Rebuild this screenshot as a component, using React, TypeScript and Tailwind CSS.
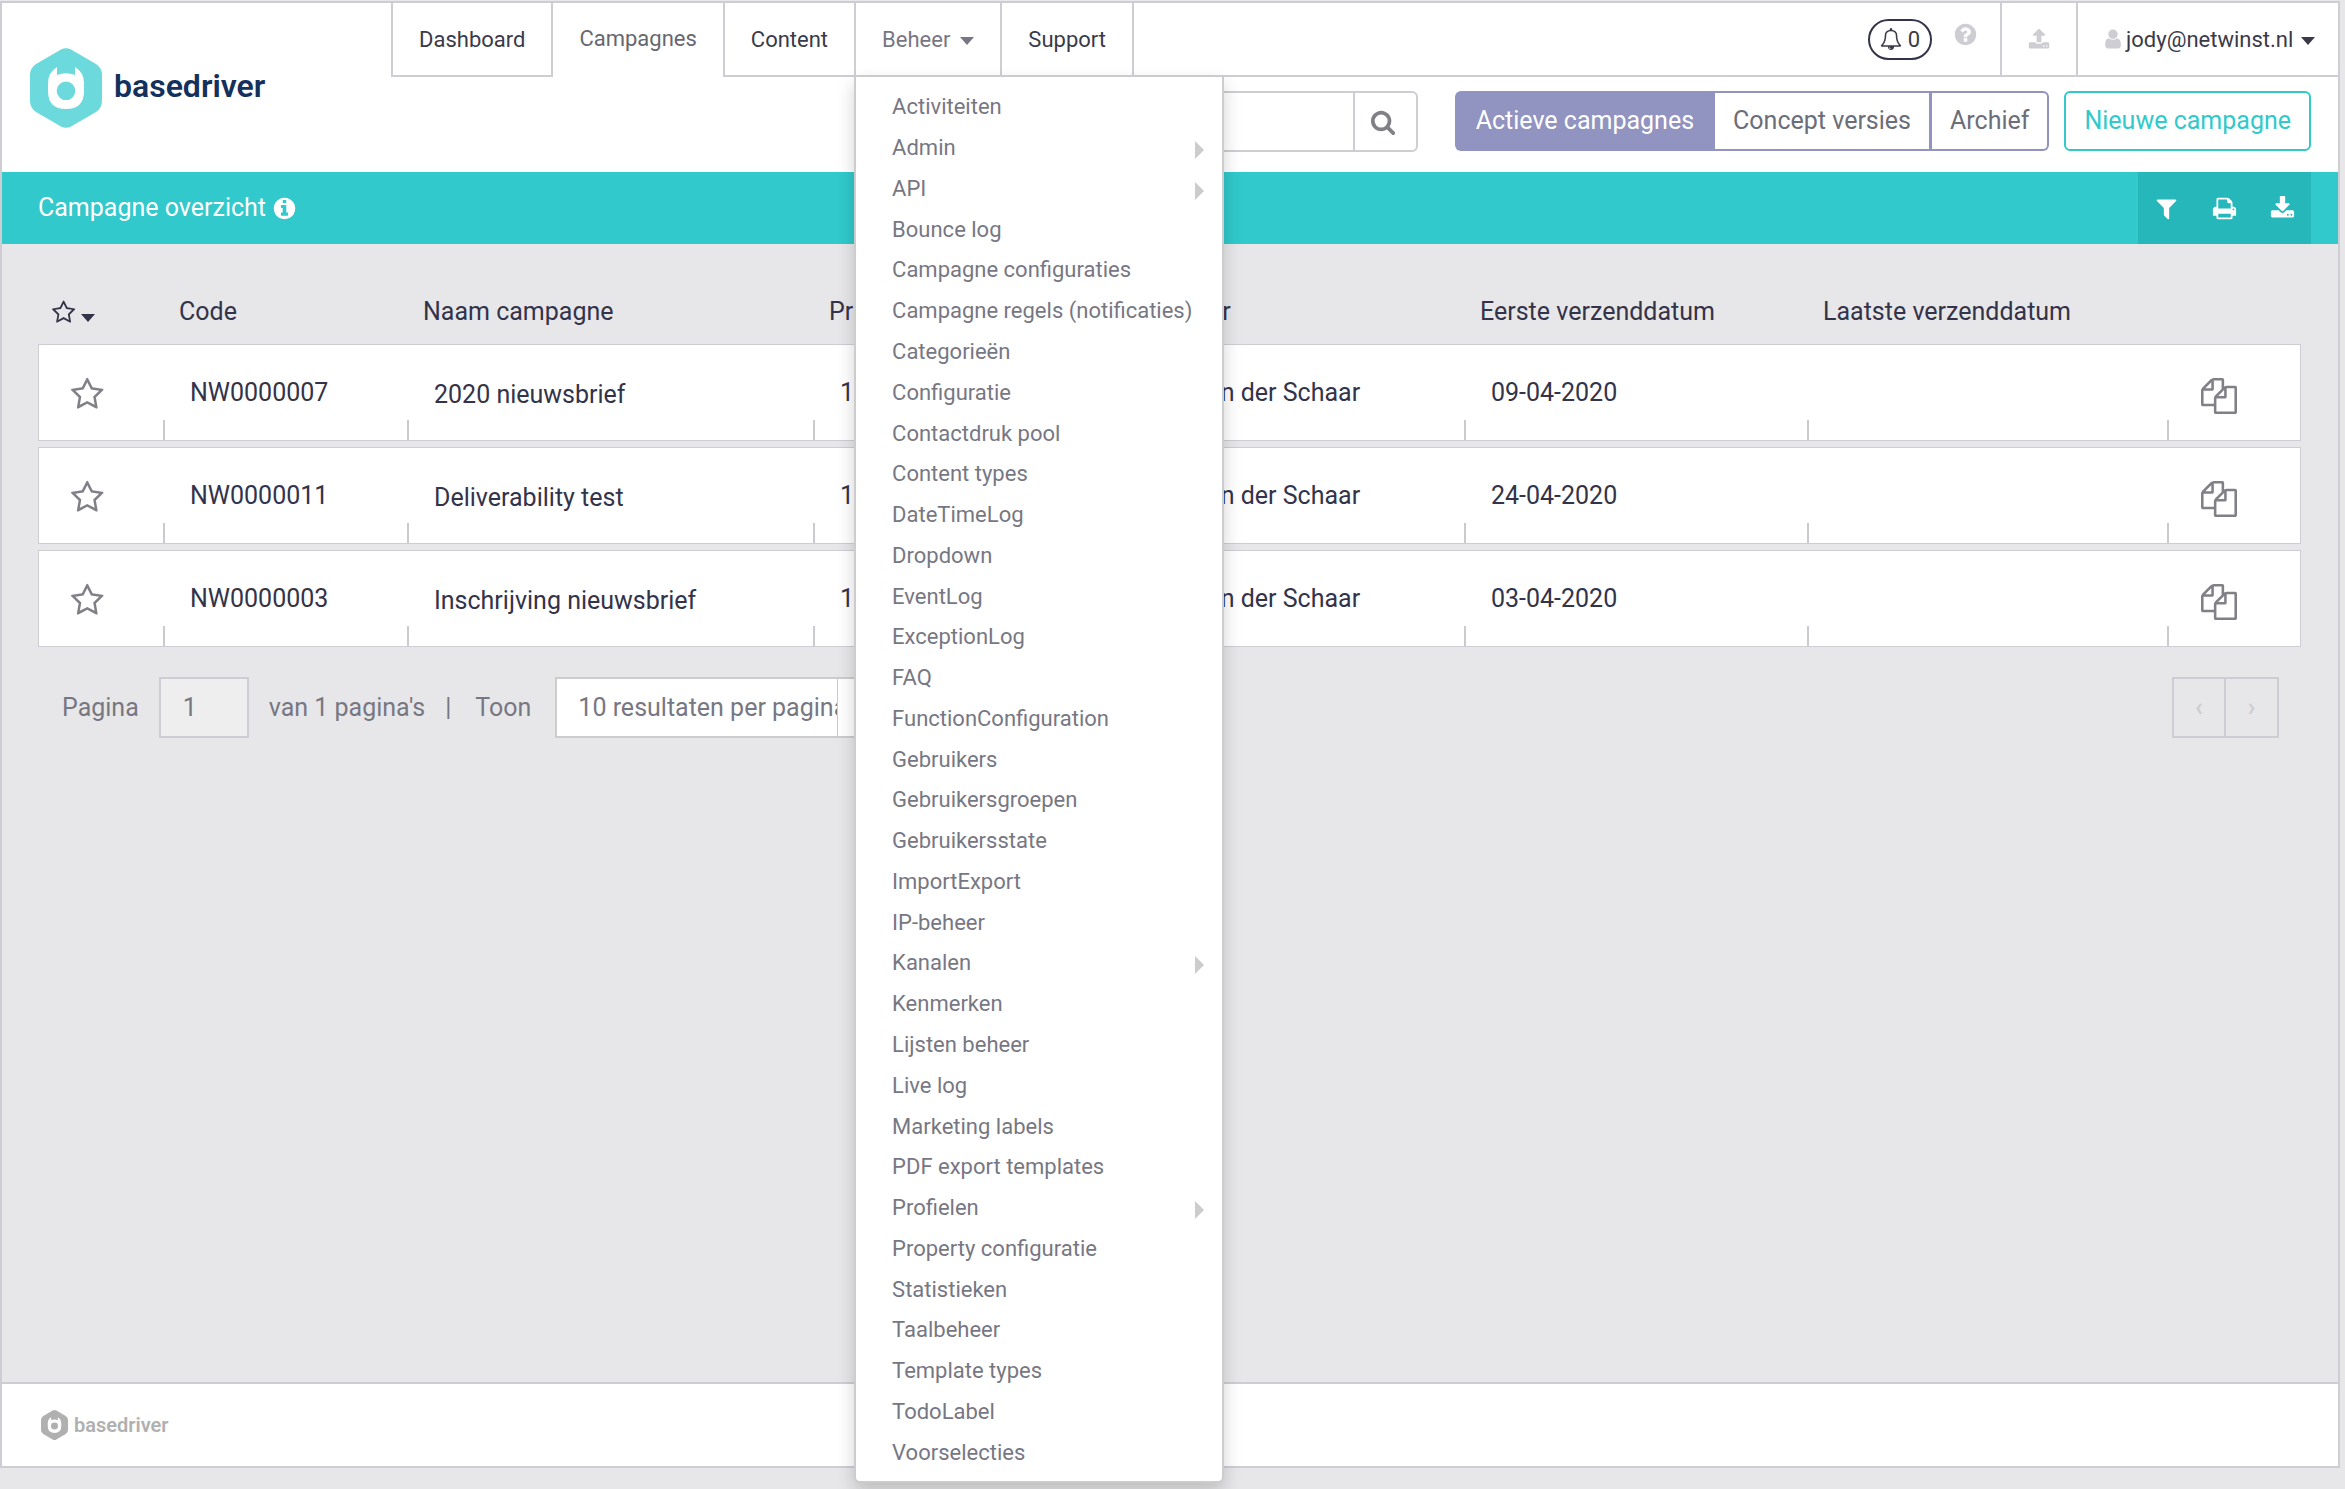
import type { ReactNode } from 'react';
import clsx from 'clsx';

const iconPaths = {
  star: 'M1137 1004l306-297-422-62-189-382-189 382-422 62 306 297-73 421 378-199 377 199zm527-357q0 22-26 48l-363 354 86 500q1 7 1 20 0 50-41 50-19 0-40-12l-449-236-449 236q-22 12-40 12-21 0-31.5-14.5t-10.5-35.5q0-6 2-20l86-500-364-354q-25-27-25-48 0-37 56-46l502-73 225-455q19-41 49-41t49 41l225 455 502 73q56 9 56 46z',
  bell: 'M912 1696q0-16-16-16-59 0-101.5-42.5t-42.5-101.5q0-16-16-16t-16 16q0 73 51.5 124.5t124.5 51.5q16 0 16-16zm-666-288h1300q-266-300-266-832 0-51-24-105t-69-103-121.5-80.5-169.5-31.5-169.5 31.5-121.5 80.5-69 103-24 105q0 532-266 832zm1482 0q0 52-38 90t-90 38h-448q0 106-75 181t-181 75-181-75-75-181h-448q-52 0-90-38t-38-90q50-42 91-88t85-119.5 74.5-158.5 50-206 19.5-260q0-152 117-282.5t307-158.5q-8-19-8-39 0-40 28-68t68-28 68 28 28 68q0 20-8 39 190 28 307 158.5t117 282.5q0 139 19.5 260t50 206 74.5 158.5 85 119.5 91 88z',
  copy: 'M1696 384q40 0 68 28t28 68v1216q0 40-28 68t-68 28h-960q-40 0-68-28t-28-68v-288h-544q-40 0-68-28t-28-68v-672q0-40 20-88t48-76l408-408q28-28 76-48t88-20h416q40 0 68 28t28 68v328q68-40 128-40h416zm-544 213l-299 299h299v-299zm-640-384l-299 299h299v-299zm196 647l316-316v-416h-384v416q0 40-28 68t-68 28h-416v640h512v-256q0-40 20-88t48-76zm956 804v-1152h-384v416q0 40-28 68t-68 28h-416v640h896z',
  upload: 'M1344 1472q0-26-19-45t-45-19-45 19-19 45 19 45 45 19 45-19 19-45zm256 0q0-26-19-45t-45-19-45 19-19 45 19 45 45 19 45-19 19-45zm128-224v320q0 40-28 68t-68 28h-1472q-40 0-68-28t-28-68v-320q0-40 28-68t68-28h427q21 56 70.5 92t110.5 36h256q61 0 110.5-36t70.5-92h427q40 0 68 28t28 68zm-325-648q-17 40-59 40h-256v448q0 26-19 45t-45 19h-256q-26 0-45-19t-19-45v-448h-256q-42 0-59-40-17-39 14-69l448-448q18-19 45-19t45 19l448 448q31 30 14 69z',
  download: 'M1344 1344q0-26-19-45t-45-19-45 19-19 45 19 45 45 19 45-19 19-45zm256 0q0-26-19-45t-45-19-45 19-19 45 19 45 45 19 45-19 19-45zm128-224v320q0 40-28 68t-68 28h-1472q-40 0-68-28t-28-68v-320q0-40 28-68t68-28h465l135 136q58 56 136 56t136-56l136-136h464q40 0 68 28t28 68zm-325-569q17 41-14 70l-448 448q-18 19-45 19t-45-19l-448-448q-31-29-14-70 17-39 59-39h256v-448q0-26 19-45t45-19h256q26 0 45 19t19 45v448h256q42 0 59 39z',
  filter: 'M1595 295q17 41-14 70l-493 493v742q0 42-39 59-13 5-25 5-27 0-45-19l-256-256q-19-19-19-45v-486l-493-493q-31-29-14-70 17-39 59-39h1280q42 0 59 39z',
  print: 'M448 1536h896v-256h-896v256zm0-640h896v-384h-160q-40 0-68-28t-28-68v-160h-640v640zm1152 64q0-26-19-45t-45-19-45 19-19 45 19 45 45 19 45-19 19-45zm128 0v416q0 13-9.5 22.5t-22.5 9.5h-224v160q0 40-28 68t-68 28h-960q-40 0-68-28t-28-68v-160h-224q-13 0-22.5-9.5t-9.5-22.5v-416q0-79 56.5-135.5t135.5-56.5h64v-544q0-40 28-68t68-28h672q40 0 88 20t76 48l152 152q28 28 48 76t20 88v256h64q79 0 135.5 56.5t56.5 135.5z',
  search: 'M1216 832q0-185-131.5-316.5t-316.5-131.5-316.5 131.5-131.5 316.5 131.5 316.5 316.5 131.5 316.5-131.5 131.5-316.5zm512 832q0 52-38 90t-90 38q-54 0-90-38l-343-342q-179 124-399 124-143 0-273.5-55.5t-225-150-150-225-55.5-273.5 55.5-273.5 150-225 225-150 273.5-55.5 273.5 55.5 225 150 150 225 55.5 273.5q0 220-124 399l343 343q37 37 37 90z',
  info: 'M1152 1376v-160q0-14-9-23t-23-9h-96v-512q0-14-9-23t-23-9h-320q-14 0-23 9t-9 23v160q0 14 9 23t23 9h96v320h-96q-14 0-23 9t-9 23v160q0 14 9 23t23 9h448q14 0 23-9t9-23zm-128-896v-160q0-14-9-23t-23-9h-192q-14 0-23 9t-9 23v160q0 14 9 23t23 9h192q14 0 23-9t9-23zm640 416q0 209-103 385.5t-279.5 279.5-385.5 103-385.5-103-279.5-279.5-103-385.5 103-385.5 279.5-279.5 385.5-103 385.5 103 279.5 279.5 103 385.5z',
  question: 'M1024 1376v-192q0-14-9-23t-23-9h-192q-14 0-23 9t-9 23v192q0 14 9 23t23 9h192q14 0 23-9t9-23zm256-672q0-88-55.5-163t-138.5-116-170-41q-243 0-371 213-15 24 8 42l132 100q7 6 19 6 16 0 25-12 53-68 86-92 34-24 86-24 48 0 85.5 26t37.5 59q0 38-20 61t-68 45q-63 28-115.5 86.5t-52.5 125.5v36q0 14 9 23t23 9h192q14 0 23-9t9-23q0-19 21.5-49.5t54.5-49.5q32-18 49-28.5t46-35 44.5-48 28-60.5 12.5-81zm384 192q0 209-103 385.5t-279.5 279.5-385.5 103-385.5-103-279.5-279.5-103-385.5 103-385.5 279.5-279.5 385.5-103 385.5 103 279.5 279.5 103 385.5z',
  user: 'M1536 1399q0 109-62.5 187t-150.5 78h-854q-88 0-150.5-78t-62.5-187q0-85 8.5-160.5t31.5-152 58.5-131 94-89 134.5-34.5q131 128 313 128t313-128q76 0 134.5 34.5t94 89 58.5 131 31.5 152 8.5 160.5zm-256-887q0 159-112.5 271.5t-271.5 112.5-271.5-112.5-112.5-271.5 112.5-271.5 271.5-112.5 271.5 112.5 112.5 271.5z',
};

function Icon({ name, className }: { name: keyof typeof iconPaths; className?: string }) {
  return (
    <svg viewBox="0 0 1792 1792" fill="currentColor" aria-hidden="true" className={clsx('shrink-0', className)}>
      <path d={iconPaths[name]} />
    </svg>
  );
}

function Caret({ className }: { className?: string }) {
  return (
    <svg viewBox="0 0 14 8" fill="currentColor" aria-hidden="true" className={clsx('h-2 w-3.5 shrink-0', className)}>
      <path d="M0 0h14L7 8z" />
    </svg>
  );
}

function LogoMark({ className }: { className?: string }) {
  return (
    <svg viewBox="0 0 72 80" aria-hidden="true" className={className}>
      <path
        fill="currentColor"
        d="M31 1.500Q36-1.200 41 1.500L66 16Q72 20 72 27V53Q72 60 66 64L41 78.500Q36 81.200 31 78.500L6 64Q0 60 0 53V27Q0 20 6 16Z"
      />
      <path
        fill="#fff"
        fillRule="evenodd"
        d="M27 19V27Q36 23.500 45 27V19Q54 24.500 54 35V43Q54 61 36 61Q18 61 18 43V35Q18 24.500 27 19ZM36 33.500A9.300 9.300 0 1 0 36 52.100A9.300 9.300 0 1 0 36 33.500Z"
      />
    </svg>
  );
}

const menuItems = [
  { label: 'Activiteiten' },
  { label: 'Admin', sub: true },
  { label: 'API', sub: true },
  { label: 'Bounce log' },
  { label: 'Campagne configuraties' },
  { label: 'Campagne regels (notificaties)' },
  { label: 'Categorieën' },
  { label: 'Configuratie' },
  { label: 'Contactdruk pool' },
  { label: 'Content types' },
  { label: 'DateTimeLog' },
  { label: 'Dropdown' },
  { label: 'EventLog' },
  { label: 'ExceptionLog' },
  { label: 'FAQ' },
  { label: 'FunctionConfiguration' },
  { label: 'Gebruikers' },
  { label: 'Gebruikersgroepen' },
  { label: 'Gebruikersstate' },
  { label: 'ImportExport' },
  { label: 'IP-beheer' },
  { label: 'Kanalen', sub: true },
  { label: 'Kenmerken' },
  { label: 'Lijsten beheer' },
  { label: 'Live log' },
  { label: 'Marketing labels' },
  { label: 'PDF export templates' },
  { label: 'Profielen', sub: true },
  { label: 'Property configuratie' },
  { label: 'Statistieken' },
  { label: 'Taalbeheer' },
  { label: 'Template types' },
  { label: 'TodoLabel' },
  { label: 'Voorselecties' },
];

function BeheerMenu() {
  return (
    <ul className="absolute top-full -left-0.5 z-10 flex h-[1408px] w-[370px] flex-col rounded-b-md border-2 border-[#ccc] bg-white pt-2.5 pb-2 shadow-[0_9px_18px_rgba(0,0,0,0.175)]">
      {menuItems.map((item) => (
        <li key={item.label} className="flex-1">
          <a href="#" className="flex h-full items-center justify-between pr-[18px] pl-9 text-[22px] leading-none text-[#777783]">
            {item.label}
            {item.sub && (
              <svg viewBox="0 0 9 18" fill="#ccc" aria-hidden="true" className="mt-1 h-[18px] w-[9px]">
                <path d="M0 0v18l9-9z" />
              </svg>
            )}
          </a>
        </li>
      ))}
    </ul>
  );
}

function NavTab({ children, className }: { children: ReactNode; className?: string }) {
  return (
    <li className={clsx('relative flex border-r-2 border-[#cdcdd3] text-[22px]', className)}>{children}</li>
  );
}

function NavBar() {
  return (
    <nav className="flex h-[74px] text-[#3a3a48]">
      <ul className="flex">
        <NavTab className="border-b-2 border-l-2">
          <a href="#" className="flex items-center px-[26px]">Dashboard</a>
        </NavTab>
        <NavTab className="pb-1 text-[#67676f]">
          <a href="#" className="flex items-center px-[26px]" aria-current="page">Campagnes</a>
        </NavTab>
        <NavTab className="border-b-2">
          <a href="#" className="flex items-center px-[26px]">Content</a>
        </NavTab>
        <NavTab className="border-b-2">
          <button type="button" aria-expanded="true" className="flex items-center gap-2.5 px-[26px] text-[#777783]">
            Beheer
            <Caret className="mt-1" />
          </button>
          <BeheerMenu />
        </NavTab>
        <NavTab className="border-b-2">
          <a href="#" className="flex items-center px-[26px]">Support</a>
        </NavTab>
      </ul>

      <div className="flex flex-1 items-stretch justify-end border-b-2 border-[#cdcdd3]">
        <div className="flex items-center gap-[21px] pr-[22px]">
          <button type="button" aria-label="Meldingen" className="flex h-[41px] items-center gap-1.5 rounded-full border-2 border-[#33334a] px-2.5 text-[22px]">
            <Icon name="bell" className="size-[22px]" />
            0
          </button>
          <button type="button" aria-label="Help" className="mb-2.5 text-[#cdcdd3]">
            <Icon name="question" className="size-[25px]" />
          </button>
        </div>
        <button type="button" aria-label="Uploaden" className="flex w-[76px] items-center justify-center border-l-2 border-[#cdcdd3] text-[#cdcdd3]">
          <Icon name="upload" className="size-[22px]" />
        </button>
        <button type="button" className="flex w-[262px] items-center border-l-2 border-[#cdcdd3] pl-6 text-[22px]">
          <Icon name="user" className="mr-0.5 size-[22px] text-[#cdcdd3]" />
          jody@netwinst.nl
          <Caret className="mt-1 ml-2" />
        </button>
      </div>
    </nav>
  );
}

function Toolbar() {
  return (
    <div className="flex items-start justify-end gap-[15px] pt-3.5 pr-[27px] text-[25px]">
      <form role="search" className="mr-[22px] flex h-[61px] w-[440px] rounded-md border-2 border-[#cdcdd3]">
        <input type="search" aria-label="Zoeken" className="min-w-0 flex-1 px-5 outline-none" />
        <button type="submit" aria-label="Zoek" className="flex w-[63px] items-center justify-center border-l-2 border-[#cdcdd3] pr-1 text-[#808087]">
          <Icon name="search" className="size-[26px]" />
        </button>
      </form>
      <div className="flex h-[60px] rounded-md text-[#6b6e78]">
        <button type="button" className="rounded-l-md bg-[#9193c0] px-[21px] text-white">Actieve campagnes</button>
        <button type="button" className="border-y-2 border-r-3 border-[#9193c0] px-[18px]">Concept versies</button>
        <button type="button" className="rounded-r-md border-2 border-l-0 border-[#9193c0] px-[18px]">Archief</button>
      </div>
      <button type="button" className="h-[60px] rounded-md border-2 border-[#31c9cb] px-[18px] text-[#31c9cb]">
        Nieuwe campagne
      </button>
    </div>
  );
}

const campaigns = [
  { code: 'NW0000007', name: '2020 nieuwsbrief', date: '09-04-2020' },
  { code: 'NW0000011', name: 'Deliverability test', date: '24-04-2020' },
  { code: 'NW0000003', name: 'Inschrijving nieuwsbrief', date: '03-04-2020' },
];

function Cell({ children, className, last }: { children?: ReactNode; className?: string; last?: boolean }) {
  return (
    <td
      className={clsx(
        'relative h-[97px] border-y border-[#cdcdd3] bg-white p-0',
        !last && 'after:absolute after:right-0 after:bottom-0 after:h-5 after:w-0.5 after:bg-[#cbcbcf]',
        className,
      )}
    >
      {children}
    </td>
  );
}

function CampaignTable() {
  return (
    <table className="w-full table-fixed border-separate border-spacing-x-0 border-spacing-y-1.5 text-[25px] text-[#33334a]">
      <colgroup>
        <col className="w-[127px]" />
        <col className="w-[244px]" />
        <col className="w-[406px]" />
        <col className="w-[295px]" />
        <col className="w-[356px]" />
        <col className="w-[343px]" />
        <col />
        <col className="w-[132px]" />
      </colgroup>
      <thead>
        <tr className="h-[52px] text-left [&>th]:p-0 [&>th]:pl-3.5 [&>th]:font-normal">
          <th>
            <button type="button" aria-label="Sorteer op favoriet" className="flex items-center gap-1">
              <Icon name="star" className="size-[25px]" />
              <Caret className="mt-3" />
            </button>
          </th>
          <th>Code</th>
          <th>Naam campagne</th>
          <th>Prioriteit</th>
          <th>Gebruiker</th>
          <th>Eerste verzenddatum</th>
          <th>Laatste verzenddatum</th>
          <th aria-label="Acties" />
        </tr>
      </thead>
      <tbody>
        {campaigns.map((c) => (
          <tr key={c.code}>
            <Cell className="border-l">
              <button type="button" aria-label="Favoriet" className="mt-1 ml-8 block text-[#808087]">
                <Icon name="star" className="size-[35px]" />
              </button>
            </Cell>
            <Cell className="pl-[25px]">{c.code}</Cell>
            <Cell className="pl-[25px]">
              <a href="#" className="mt-1 block">{c.name}</a>
            </Cell>
            <Cell className="pl-[25px]">1</Cell>
            <Cell className="pl-[25px]">Jody van der Schaar</Cell>
            <Cell className="pl-[25px]">{c.date}</Cell>
            <Cell />
            <Cell last className="border-r">
              <button type="button" aria-label="Kopiëren" className="mt-1.5 ml-8 block text-[#808087]">
                <Icon name="copy" className="size-9" />
              </button>
            </Cell>
          </tr>
        ))}
      </tbody>
    </table>
  );
}

function Pagination() {
  return (
    <div className="mt-6 flex items-center pr-[22px] pl-6 text-[25px] text-[#777783]">
      <label htmlFor="page">Pagina</label>
      <input id="page" defaultValue="1" className="ml-5 h-[61px] w-[90px] border-2 border-[#cdcdd3] bg-[#eeeeef] px-[22px]" />
      <span className="ml-5">van 1 pagina's</span>
      <span className="mr-6 ml-5">|</span>
      <label htmlFor="page-size">Toon</label>
      <div className="ml-6 flex h-[61px] border-2 border-[#ccc] bg-white">
        <select id="page-size" className="w-[281px] appearance-none border-r border-[#ccc] pl-[21px]">
          <option>10 resultaten per pagina</option>
        </select>
        <span className="flex w-14 items-center justify-center">
          <Caret />
        </span>
      </div>
      <div className="ml-auto flex h-[61px] border-2 border-[#cdcdd3] text-[#cdcdd3]">
        <button type="button" disabled aria-label="Vorige pagina" className="w-[52px] border-r-2 border-[#cdcdd3] font-bold">‹</button>
        <button type="button" disabled aria-label="Volgende pagina" className="w-[51px] font-bold">›</button>
      </div>
    </div>
  );
}

export default function App() {
  return (
    <div className="flex min-h-screen flex-col bg-[#e7e7e9] pt-px pr-[5px] pb-[21px] font-[Roboto,sans-serif]">
      <div className="flex flex-1 flex-col border-2 border-[#cdcdd3]">
        <header className="flex h-[169px] bg-white">
          <a href="#" className="flex w-[389px] shrink-0 items-center gap-3 pl-7">
            <LogoMark className="h-20 w-[72px] text-[#6cd9dd]" />
            <span className="pb-1 text-[32px] leading-none font-semibold text-[#14305c]">basedriver</span>
          </a>
          <div className="flex-1">
            <NavBar />
            <Toolbar />
          </div>
        </header>

        <div className="flex h-[72px] items-stretch justify-between bg-[#31c9cb] pr-[27px] pl-9 text-white">
          <h1 className="flex items-center gap-1.5 text-[25px]">
            Campagne overzicht
            <Icon name="info" className="size-[25px]" />
          </h1>
          <div className="flex bg-[#25b7ba]">
            <button type="button" aria-label="Filter" className="flex w-[57px] items-center justify-center">
              <Icon name="filter" className="size-[25px]" />
            </button>
            <button type="button" aria-label="Afdrukken" className="flex w-[58px] items-center justify-center">
              <Icon name="print" className="size-[25px]" />
            </button>
            <button type="button" aria-label="Downloaden" className="flex w-[58px] items-center justify-center">
              <Icon name="download" className="size-[25px]" />
            </button>
          </div>
        </div>

        <main className="flex-1 pt-9 pr-[37px] pl-9">
          <CampaignTable />
          <Pagination />
        </main>

        <footer className="flex h-[84px] items-center gap-1.5 border-t-2 border-[#cdcdd3] bg-white pl-[39px] text-[#b0b0b0]">
          <LogoMark className="h-[30px] w-[27px]" />
          <span className="text-xl leading-none font-semibold">basedriver</span>
        </footer>
      </div>
    </div>
  );
}
